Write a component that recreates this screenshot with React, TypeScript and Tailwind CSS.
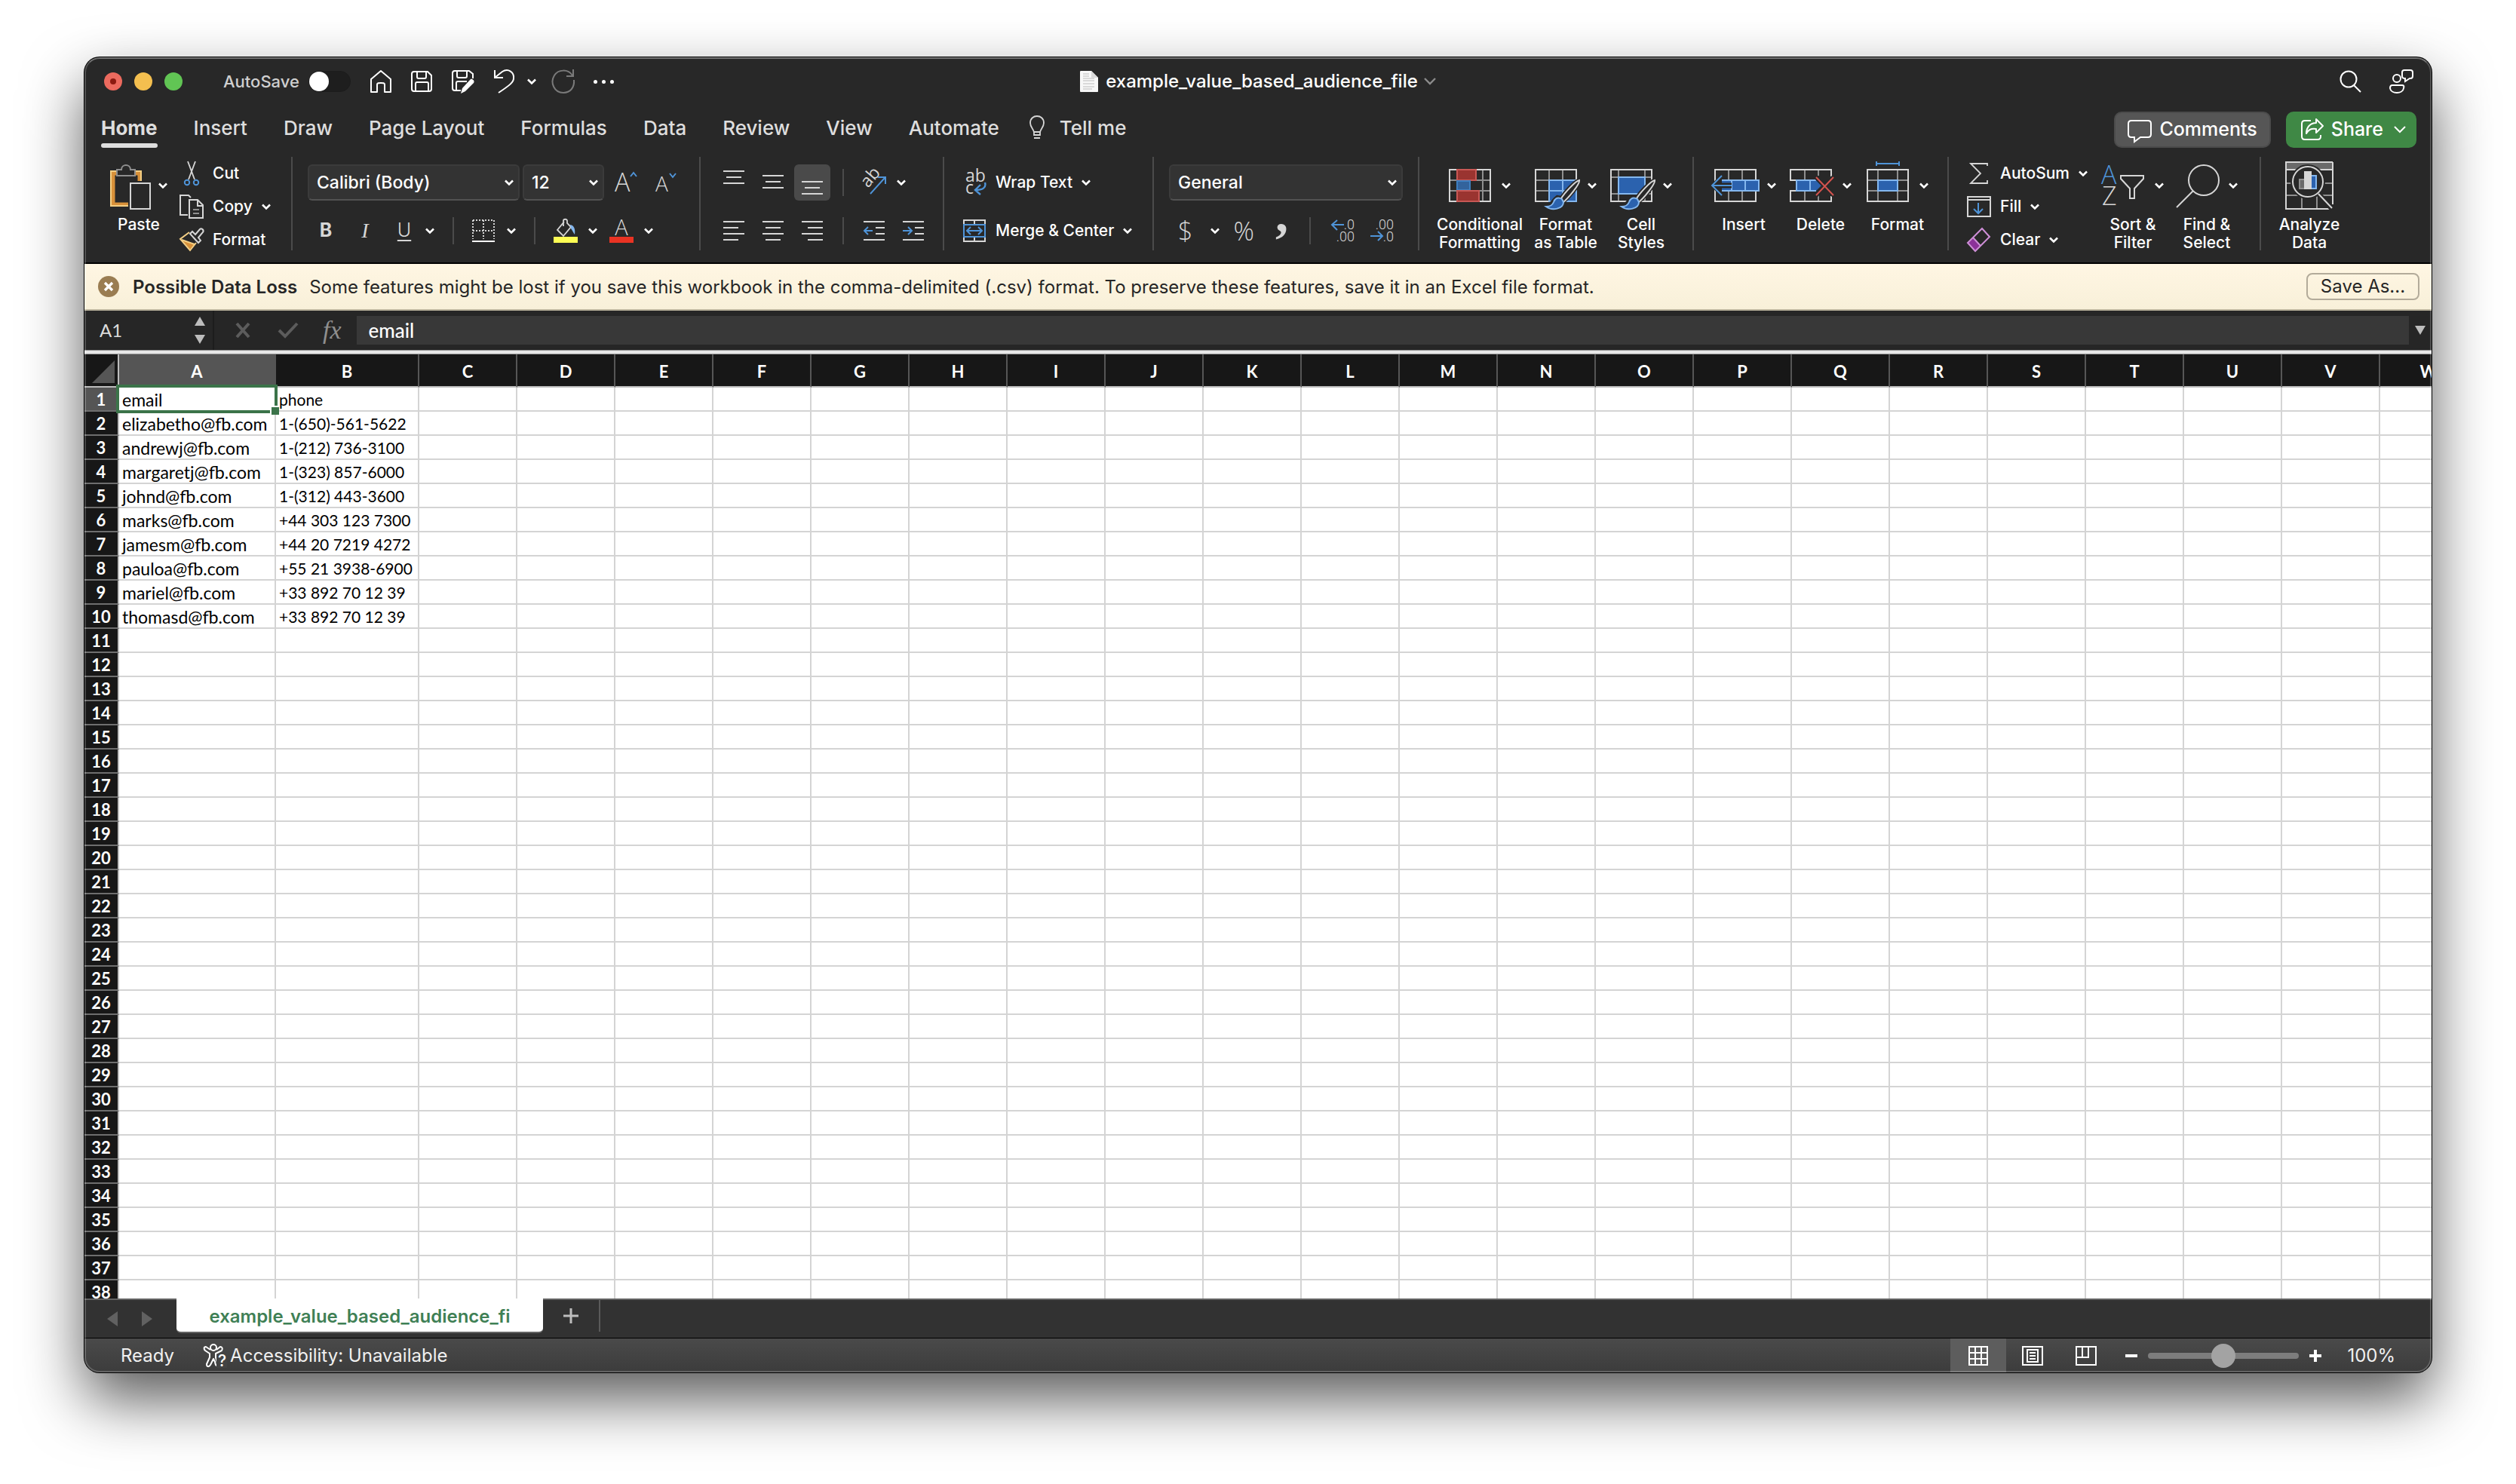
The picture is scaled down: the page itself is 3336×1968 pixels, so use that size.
import React from "react";

const COLUMNS = 'ABCDEFGHIJKLMNOPQRSTUVW'.split('')
const ROW_COUNT = 38

const CELLS: string[][] = [
  ['email', 'phone'],
  ['elizabetho@fb.com', '1-(650)-561-5622'],
  ['andrewj@fb.com', '1-(212) 736-3100'],
  ['margaretj@fb.com', '1-(323) 857-6000'],
  ['johnd@fb.com', '1-(312) 443-3600'],
  ['marks@fb.com', '+44 303 123 7300'],
  ['jamesm@fb.com', '+44 20 7219 4272'],
  ['pauloa@fb.com', '+55 21 3938-6900'],
  ['mariel@fb.com', '+33 892 70 12 39'],
  ['thomasd@fb.com', '+33 892 70 12 39'],
]

const TABS = ['Home', 'Insert', 'Draw', 'Page Layout', 'Formulas', 'Data', 'Review', 'View', 'Automate']

// icon colours
const GREY = '#d6d6d6'
const DIM = '#8f8f8f'
const BLUE = '#4f94d8'
const FILL = '#2b62ae'
const LIGHT = '#84b7ee'
const PAGE = '#282828'

// ---------------------------------------------------------------- basics

interface SvgProps {
  w: number
  h: number
  className?: string
  children: React.ReactNode
}

const Svg = ({ w, h, className = '', children }: SvgProps) => (
  <svg
    width={w}
    height={h}
    viewBox={`0 0 ${w} ${h}`}
    fill="none"
    stroke={GREY}
    strokeWidth={2}
    className={`shrink-0 overflow-visible ${className}`}
    aria-hidden="true"
  >
    {children}
  </svg>
)

const Chevron = ({ className = '' }: { className?: string }) => (
  <Svg w={12} h={8} className={className}>
    <path d="M1 1.5L6 6.5L11 1.5" stroke="#ffffff" strokeWidth={2.6} />
  </Svg>
)

const GroupDivider = () => <div className="h-[124px] w-0.5 shrink-0 bg-[#4b4b4b]" />
const SmallDivider = ({ className = '' }: { className?: string }) => (
  <div className={`h-9 w-0.5 shrink-0 bg-[#4b4b4b] ${className}`} />
)

interface BigButtonProps {
  icon: React.ReactNode
  label: string[]
  chevron?: boolean
  className?: string
}

/** Tall ribbon button, with its label below the icon. */
const BigButton = ({ icon, label, chevron = true, className = 'w-[84px]' }: BigButtonProps) => (
  <button className={`flex shrink-0 flex-col items-center gap-2 pt-1.5 ${className}`}>
    <span className="flex h-16 items-center gap-2.5">
      {icon}
      {chevron && <Chevron />}
    </span>
    <span className="text-[21px] leading-6 font-medium whitespace-nowrap">
      {label.map(line => <span key={line} className="block">{line}</span>)}
    </span>
  </button>
)

interface RowButtonProps {
  icon: React.ReactNode
  label: string
  chevron?: boolean
  className?: string
}

/** Flat ribbon button, with its label beside the icon. */
const RowButton = ({ icon, label, chevron = true, className = 'h-11' }: RowButtonProps) => (
  <button className={`flex items-center gap-3 text-[21px] font-medium whitespace-nowrap ${className}`}>
    <span className="flex w-8 justify-center">{icon}</span>
    {label}
    {chevron && <Chevron />}
  </button>
)

interface IconButtonProps {
  label: string
  active?: boolean
  children: React.ReactNode
}

const IconButton = ({ label, active = false, children }: IconButtonProps) => (
  <button
    aria-label={label}
    className={`flex size-12 shrink-0 items-center justify-center rounded-md ${active ? 'bg-[#4a4a4a]' : ''}`}
  >
    {children}
  </button>
)

interface PickerProps {
  label: string
  value: string
  className: string
}

const Picker = ({ label, value, className }: PickerProps) => (
  <div className={`relative h-12 shrink-0 ${className}`}>
    <select
      aria-label={label}
      className="size-full appearance-none rounded-md border-2 border-[#3b3b3b] border-b-[#525252] bg-[#333333] pl-2.5 text-[23px] font-medium text-white"
    >
      <option>{value}</option>
    </select>
    <Chevron className="pointer-events-none absolute top-5 right-2" />
  </div>
)

// ---------------------------------------------------------------- icons

const Lines = ({ rows }: { rows: [number, number, number][] }) => (
  <Svg w={28} h={34}>
    {rows.map(([x1, x2, y]) => <path key={y} d={`M${x1} ${y}H${x2}`} />)}
  </Svg>
)

const PasteIcon = () => (
  <Svg w={54} h={64}>
    <path d="M8 16H4V57H24M34 16H39V26" stroke="#d8913a" strokeWidth={5} />
    <path d="M8 13H1V59H24M34 13H41V26" stroke="#f4cf85" />
    <path d="M9 19V11H15C15 3 27 3 27 11H33V19Z" fill={PAGE} stroke={DIM} />
    <rect x="27" y="29" width="26" height="34" fill={PAGE} />
  </Svg>
)

const CutIcon = () => (
  <Svg w={24} h={32}>
    <path d="M7 0L16 24M17 0L8 24" strokeWidth={1.8} />
    <circle cx="6" cy="28" r="3.200" stroke={BLUE} />
    <circle cx="18" cy="28" r="3.200" stroke={BLUE} />
  </Svg>
)

const CopyIcon = () => (
  <Svg w={32} h={32}>
    <path d="M11 27H1V1H12L15 4" />
    <path d="M13 7H24L31 14V31H13ZM24 7V15H31" />
    <path d="M18 20H26M18 25H26" stroke={DIM} />
  </Svg>
)

const BrushIcon = () => (
  <Svg w={32} h={32}>
    <path d="M3 16L20 22L14 29Z" fill="#d8913a" stroke="none" />
    <path d="M13 6L1 15L14 30L22 20M3 16L20 22" stroke="#f4cf85" />
    <path d="M14 8L17 5L21 9L27 2C29 0 33 3 31 6L25 13L28 17L25 20Z" fill={PAGE} />
  </Svg>
)

const BorderIcon = () => (
  <Svg w={30} h={30}>
    <path d="M1 1H29M1 1V26M29 1V26M15 1V26M1 15H29" strokeDasharray="2 2" />
    <path d="M0 29H30" stroke="#ffffff" />
  </Svg>
)

const BucketIcon = () => (
  <Svg w={32} h={32}>
    <path d="M14 4L5 15L13 23L23 11L18 6V3C18 0 13 0 13 3V10" strokeWidth={1.8} />
    <path d="M22 8C27 9 29 13 28 21C26 18 25 16 23 13Z" fill={LIGHT} stroke="none" />
    <path d="M0 28H32" stroke="#fdfd54" strokeWidth={8} />
  </Svg>
)

const FontColourIcon = () => (
  <Svg w={32} h={32}>
    <text x="16" y="22" textAnchor="middle" fontSize="29" fontFamily="Open Sans" fontWeight="300" fill={GREY} stroke="none">A</text>
    <path d="M0 28H32" stroke="#e93323" strokeWidth={8} />
  </Svg>
)

const FontSizeIcon = ({ grow }: { grow: boolean }) => (
  <Svg w={30} h={34}>
    <text x="0" y="29" fontSize={grow ? 34 : 28} fontFamily="Open Sans" fontWeight="300" fill={GREY} stroke="none">A</text>
    <path d={grow ? 'M21 9L25 4L29 9' : 'M19 5L23 10L27 5'} stroke={BLUE} />
  </Svg>
)

const OrientationIcon = () => (
  <Svg w={32} h={32}>
    <text x="8" y="24" transform="rotate(-50 8 24)" fontSize="23" fontFamily="Open Sans" fill={GREY} stroke="none">ab</text>
    <path d="M11 31L30 10M21 9H31V18" stroke={BLUE} />
  </Svg>
)

const WrapIcon = () => (
  <Svg w={32} h={36}>
    <text x="4" y="17" fontSize="23" fontFamily="Open Sans" fill={GREY} stroke="none">ab</text>
    <text x="4" y="33" fontSize="23" fontFamily="Open Sans" fill={GREY} stroke="none">c</text>
    <path d="M30 18C32 25 27 28 17 28M24 21L17 28L24 34" stroke={BLUE} strokeWidth={2.4} />
  </Svg>
)

const MergeIcon = () => (
  <Svg w={30} h={30}>
    <path d="M1 1H29V29H1ZM15 1V7M15 23V29" />
    <rect x="1" y="7" width="28" height="16" fill={PAGE} stroke={BLUE} />
    <path d="M5 15H25M10 10L5 15L10 20M20 10L25 15L20 20" stroke={BLUE} />
  </Svg>
)

const IndentIcon = ({ increase }: { increase: boolean }) => (
  <Svg w={28} h={34}>
    <path d="M0 5H28M16 13H28M16 21H28M0 29H28" />
    <path d={increase ? 'M0 17H11M7 12L12 17L7 22' : 'M1 17H12M6 12L1 17L6 22'} stroke={BLUE} />
  </Svg>
)

const DecimalIcon = ({ increase }: { increase: boolean }) => (
  <Svg w={34} h={36}>
    <g fontSize="18" fontFamily="Roboto" fontWeight="300" fill={GREY} stroke="none" textAnchor="end">
      <text x="34" y="16">{increase ? '.0' : '.00'}</text>
      <text x="34" y="32">{increase ? '.00' : '.0'}</text>
    </g>
    <path d={increase ? 'M4 10H20M11 4L4 10L11 17' : 'M3 25H19M13 19L19 25L13 31'} stroke={BLUE} />
  </Svg>
)

const ConditionalIcon = () => (
  <Svg w={60} h={64}>
    <path d="M12 11V53M45 11V53M1 25H55M1 39H55" stroke={DIM} />
    <rect x="1" y="11" width="54" height="42" />
    <rect x="11" y="11" width="25" height="14" fill="#9a3430" stroke="#c85855" />
    <rect x="11" y="26" width="17" height="12" fill="#33639c" stroke="#3f7fc0" />
    <rect x="11" y="39" width="29" height="14" fill="#9a3430" stroke="#c85855" />
  </Svg>
)

const PaintBrush = () => (
  <g>
    <path d="M60 25C55 25 38 43 36 49L30 48C22 54 24 58 14 60C24 67 39 62 39 52C45 47 60 29 60 25Z" stroke={PAGE} strokeWidth={6} />
    <path d="M59 25C54 26 38 43 34 51L38 54C45 48 60 30 59 25Z" fill={PAGE} />
    <path d="M36 50C29 46 26 51 25 54C23 59 20 60 15 60C23 66 38 63 38 54Z" fill={FILL} stroke={LIGHT} />
  </g>
)

const FormatTableIcon = () => (
  <Svg w={60} h={64}>
    <path d="M19 11V53M37 11V53M1 25H55M1 39H55" stroke={DIM} />
    <rect x="1" y="11" width="54" height="42" />
    <rect x="19" y="25" width="36" height="28" fill={FILL} stroke={LIGHT} />
    <path d="M37 25V53M19 39H55" stroke={LIGHT} />
    <PaintBrush />
  </Svg>
)

const CellStylesIcon = () => (
  <Svg w={60} h={64}>
    <path d="M11 11V53M46 11V53M1 21H55M1 43H55" stroke={DIM} />
    <rect x="1" y="11" width="54" height="42" />
    <rect x="11" y="21" width="35" height="22" fill={FILL} stroke={LIGHT} />
    <PaintBrush />
  </Svg>
)

const InsertIcon = () => (
  <Svg w={64} h={64}>
    <path d="M23 11V53M41 11V53" stroke={DIM} />
    <rect x="5" y="11" width="54" height="42" />
    <path d="M3 32L12 22V42Z" stroke={PAGE} strokeWidth={6} fill={PAGE} />
    <rect x="12" y="25" width="51" height="14" fill={FILL} stroke={LIGHT} />
    <path d="M45 25V39M27 25V39" stroke={LIGHT} />
    <path d="M1 32H27" stroke={PAGE} strokeWidth={7} />
    <path d="M12 23V41" stroke={PAGE} strokeWidth={4} />
    <path d="M1 32H27M14 19L1 32L14 45" stroke={BLUE} />
  </Svg>
)

const DeleteIcon = () => (
  <Svg w={60} h={64}>
    <path d="M20 11V53M38 11V19M38 45V53" stroke={DIM} />
    <path d="M9 25H1V11H55V20M9 39H1V53H55V46" />
    <path d="M9 25H35L42 32L35 39H9Z" fill={FILL} stroke="none" />
    <path d="M35 25H9V39H35M27 25V39" stroke={LIGHT} />
    <path d="M35 21L58 45M58 21L35 45" stroke={PAGE} strokeWidth={6} />
    <path d="M35 21L58 45M58 21L35 45" stroke="#d5534e" />
  </Svg>
)

const FormatIcon = () => (
  <Svg w={60} h={64}>
    <path d="M15 11V53M41 11V53M1 25H55M1 39H55" stroke={DIM} />
    <rect x="1" y="11" width="54" height="42" />
    <rect x="15" y="25" width="26" height="14" fill={FILL} stroke={LIGHT} />
    <path d="M13 3H43M13 0V6M43 0V6" stroke={BLUE} />
  </Svg>
)

const SumIcon = () => (
  <Svg w={24} h={28}>
    <path d="M23 4V1H1L14 14L1 27H23V23" strokeWidth={1.8} />
  </Svg>
)

const FillIcon = () => (
  <Svg w={32} h={28}>
    <path d="M1 1H31V27H1ZM1 5H31" />
    <path d="M15 9V22M9 17L15 23L21 17" stroke={BLUE} />
  </Svg>
)

const EraserIcon = () => (
  <Svg w={32} h={32}>
    <path d="M8 14L17 24L11 30L2 20Z" fill="#8b3199" stroke="none" />
    <path d="M20 1L30 12L11 31L1 20ZM8 13L18 24" stroke="#cf8fd8" />
  </Svg>
)

const SortIcon = () => (
  <Svg w={60} h={64}>
    <text x="-1" y="30" fontSize="34" fontFamily="Open Sans" fontWeight="300" fill={BLUE} stroke="none">A</text>
    <text x="0" y="58" fontSize="34" fontFamily="Open Sans" fontWeight="300" fill={GREY} stroke="none">Z</text>
    <path d="M25 19H55V23L43 36V49H37V36L25 23Z" />
  </Svg>
)

const FindIcon = () => (
  <Svg w={60} h={64}>
    <circle cx="37" cy="25" r="20" />
    <path d="M23 39L1 61" />
  </Svg>
)

const AnalyzeIcon = () => (
  <Svg w={64} h={64}>
    <path d="M2 2H62V11H2Z" fill="#6a6a6a" stroke="none" />
    <path d="M2 29H62M2 45H62M22 48V63M42 45V63" stroke={DIM} />
    <path d="M1 11H63" />
    <path d="M63 1H1V63H60M63 1V57" />
    <circle cx="30" cy="27" r="22" fill={PAGE} stroke={PAGE} />
    <path d="M44 43L63 64" stroke={PAGE} strokeWidth={7} />
    <circle cx="30" cy="27" r="20" fill={PAGE} />
    <path d="M44 43L62 62" />
    <rect x="19" y="24" width="7" height="12" fill="#6a6a6a" stroke={DIM} />
    <rect x="33" y="19" width="8" height="17" fill={FILL} stroke={LIGHT} />
    <rect x="26" y="14" width="8" height="22" fill={GREY} />
  </Svg>
)

const HomeIcon = () => (
  <Svg w={28} h={32}>
    <path d="M1 13L14 2L27 13V30H19V20C19 18 17 18 14 18C11 18 9 18 9 20V30H1Z" stroke="#ffffff" strokeLinejoin="round" />
  </Svg>
)

const SaveIcon = () => (
  <Svg w={28} h={28}>
    <path d="M1 4C1 2 2 1 4 1H22L27 6V24C27 26 26 27 24 27H4C2 27 1 26 1 24ZM8 1V8C8 10 9 10 10 10H18C20 10 20 9 20 8V1M6 27V17C6 15 7 15 8 15H21C22 15 23 15 23 17V27" stroke="#ffffff" />
  </Svg>
)

const SavePenIcon = () => (
  <Svg w={30} h={32}>
    <path d="M28 12V6L23 2H4C2 2 1 3 1 5V25C1 27 2 28 4 28H12M7 2V9C7 10 8 11 9 11H18C19 11 20 10 20 9V2M6 28V18C6 16 7 16 8 16H20" stroke="#ffffff" />
    <path d="M12 32L14 25L25 13C27 12 31 15 29 18L18 29Z" fill="#ffffff" stroke="none" />
  </Svg>
)

const UndoIcon = () => (
  <Svg w={28} h={32}>
    <path d="M1 1V11H12M1 11L11 3C19 -2 27 4 26 12C26 17 21 21 6 31" stroke="#ffffff" />
  </Svg>
)

const RedoIcon = () => (
  <Svg w={32} h={32}>
    <path d="M29 0V9H20M28 8C22 -1 9 0 4 8C-2 18 4 31 16 31C25 31 31 24 30 14" stroke="#7a7a7a" />
  </Svg>
)

const DocIcon = () => (
  <Svg w={24} h={28}>
    <path d="M0 1C0 0 1 0 1 0H15L24 9V27C24 28 23 28 23 28H1C0 28 0 27 0 27Z" fill="#f7f7f7" stroke="none" />
    <path d="M15 0V9H24Z" fill="#dadada" stroke="none" />
    <path d="M4 4H12M4 7H12M4 10H19M4 13H19M4 17H19M4 21H19M4 24H16" stroke="#cfcfcf" strokeWidth={1.4} />
  </Svg>
)

const AccessibilityIcon = () => (
  <Svg w={32} h={32}>
    <circle cx="14" cy="5" r="4" stroke="#ffffff" />
    <path d="M10 8L4 4C1 4 1 7 3 9L9 13V18L5 27C5 31 8 31 10 28L14 20L16 24C17 31 21 30 19 25L17 18V13L25 9C27 6 25 4 23 4L18 8" stroke="#ffffff" strokeLinejoin="round" />
    <path d="M18 32V15H32V32Z" fill="#434343" stroke="none" />
    <text x="20" y="30" fontSize="21" fontFamily="Inter" fontWeight="500" fill="#ffffff" stroke="none">?</text>
  </Svg>
)

// ---------------------------------------------------------------- sections

const TitleBar = () => (
  <div className="grid h-16 grid-cols-[1fr_auto_1fr] items-center">
    <div className="flex items-center pl-[26px]">
      <div className="flex gap-4">
        <button aria-label="Close" className="flex size-6 items-center justify-center rounded-full bg-[#ec6a5e]">
          <span className="size-2 rounded-full bg-[#8c1a10]" />
        </button>
        <button aria-label="Minimize" className="size-6 rounded-full bg-[#f4bf4f]" />
        <button aria-label="Zoom" className="size-6 rounded-full bg-[#61c554]" />
      </div>
      <label className="ml-[54px] flex items-center gap-3 text-[22px] font-medium text-[#cfcfcf]">
        AutoSave
        <input
          type="checkbox"
          role="switch"
          className="h-7 w-14 appearance-none rounded-full border border-[#1c1c1c] bg-[#1e1e1e] before:block before:size-[26px] before:rounded-full before:bg-white"
        />
      </label>
      <div className="ml-[26px] flex items-center gap-[26px]">
        <button aria-label="Home"><HomeIcon /></button>
        <button aria-label="Save"><SaveIcon /></button>
        <button aria-label="Save As"><SavePenIcon /></button>
        <button aria-label="Undo" className="flex items-center gap-4"><UndoIcon /><Chevron /></button>
      </div>
      <button aria-label="Redo" className="ml-5"><RedoIcon /></button>
      <button aria-label="More" className="ml-6 flex gap-1.5">
        <span className="size-[5px] rounded-full bg-white" />
        <span className="size-[5px] rounded-full bg-white" />
        <span className="size-[5px] rounded-full bg-white" />
      </button>
    </div>
    <h1 className="flex items-center text-2xl font-medium text-white">
      <DocIcon />
      <span className="ml-2.5">example_value_based_audience_file</span>
      <Svg w={16} h={10} className="ml-2">
        <path d="M1 1L8 8L15 1" stroke="#8c8c8c" strokeWidth={2.4} />
      </Svg>
    </h1>
    <div className="flex items-center justify-end gap-9 pr-6">
      <button aria-label="Search">
        <Svg w={30} h={30}>
          <circle cx="12" cy="12" r="10.500" stroke="#ffffff" />
          <path d="M19 20L28 29" stroke="#ffffff" />
        </Svg>
      </button>
      <button aria-label="Presence">
        <Svg w={32} h={32}>
          <circle cx="10" cy="12" r="5" stroke="#ffffff" />
          <path d="M4 21H17C19 21 20 22 19 25C18 33 2 33 1 25C1 22 2 21 4 21ZM20 1H28C30 1 31 2 31 4V9C31 11 30 12 28 12H27L21 16V12C18 12 17 11 17 9V4C17 2 18 1 20 1Z" stroke="#ffffff" />
        </Svg>
      </button>
    </div>
  </div>
)

const TabRow = () => {
  const [current, setCurrent] = React.useState('Home')
  return (
    <div className="flex h-16 items-start pr-5 pl-[22px] text-[26px] text-[#dedede]">
      <nav className="flex gap-12">
        {TABS.map(tab => (
          <button
            key={tab}
            className={`relative h-14 pt-0.5 whitespace-nowrap ${tab === current ? 'font-bold' : 'font-medium'}`}
            onClick={() => setCurrent(tab)}
          >
            {tab}
            {tab === current && <span className="absolute inset-x-0 bottom-0 h-1.5 rounded-full bg-[#dedede]" />}
          </button>
        ))}
      </nav>
      <button className="ml-10 flex h-14 items-center gap-5 pt-0.5 font-medium">
        <Svg w={20} h={32}>
          <path d="M6 23C6 18 1 16 1 10C1 -2 19 -2 19 10C19 16 14 18 14 23V26H6V22H14M6 30H14" strokeWidth={1.8} />
        </Svg>
        Tell me
      </button>
      <div className="mt-2 ml-auto flex gap-5 text-[25px] text-white">
        <button className="flex h-12 items-center gap-2.5 rounded-[10px] border-2 border-[#4b4b4b] bg-[#565656] px-4 font-medium">
          <Svg w={32} h={32} className="mt-1">
            <path d="M5 2H27C30 2 31 3 31 6V20C31 23 30 24 27 24H17L9 30V24H5C2 24 1 23 1 20V6C1 3 2 2 5 2Z" stroke="#ffffff" />
          </Svg>
          Comments
        </button>
        <button className="flex h-12 items-center rounded-[10px] bg-[#3f8845] px-3.5 pl-5 font-medium">
          <Svg w={30} h={30}>
            <path d="M13 3H5C2 3 1 4 1 7V24C1 27 2 28 5 28H22C25 28 26 27 26 24V22M20 1L29 10L20 19V14C13 13 10 15 7 20C7 12 12 6 20 6Z" stroke="#ffffff" strokeLinejoin="round" />
          </Svg>
          <span className="ml-2.5">Share</span>
          <Svg w={16} h={12} className="ml-3.5">
            <path d="M1 2L8 9L15 2" stroke="#ffffff" />
          </Svg>
        </button>
      </div>
    </div>
  )
}

const Ribbon = () => (
  <div className="flex h-36 items-start overflow-hidden pt-1 text-white">

    {/* Clipboard */}
    <section className="flex w-[274px] shrink-0 items-start gap-4 pl-[34px]">
      <BigButton icon={<PasteIcon />} label={['Paste']} className="w-[76px]" />
      <div className="flex flex-col">
        <RowButton icon={<CutIcon />} label="Cut" chevron={false} />
        <RowButton icon={<CopyIcon />} label="Copy" />
        <RowButton icon={<BrushIcon />} label="Format" chevron={false} />
      </div>
    </section>
    <GroupDivider />

    {/* Font */}
    <section className="flex w-[539px] shrink-0 flex-col gap-4 pt-2.5 pl-5">
      <div className="flex items-center">
        <Picker label="Font" value="Calibri (Body)" className="w-[281px]" />
        <Picker label="Font size" value="12" className="ml-1 w-[108px]" />
        <button aria-label="Increase font size" className="ml-3.5"><FontSizeIcon grow={true} /></button>
        <button aria-label="Decrease font size" className="ml-6"><FontSizeIcon grow={false} /></button>
      </div>
      <div className="flex h-12 items-center">
        <div className="flex gap-1 text-[25px] text-[#d6d6d6]">
          <button aria-label="Bold" className="size-12 font-bold">B</button>
          <button aria-label="Italic" className="size-12 font-[Liberation_Serif,serif] text-[28px] italic">I</button>
          <button aria-label="Underline" className="size-12 font-light underline underline-offset-4">U</button>
        </div>
        <Chevron className="ml-1" />
        <SmallDivider className="ml-6" />
        <button aria-label="Borders" className="ml-6 flex items-center gap-4"><BorderIcon /><Chevron /></button>
        <SmallDivider className="ml-6" />
        <button aria-label="Fill colour" className="ml-6 flex items-center gap-3.5"><BucketIcon /><Chevron /></button>
        <button aria-label="Font colour" className="ml-4 flex items-center gap-3.5"><FontColourIcon /><Chevron /></button>
      </div>
    </section>
    <GroupDivider />

    {/* Alignment */}
    <section className="flex w-[321px] shrink-0 flex-col gap-4 pt-2.5 pl-5">
      <div className="flex items-center">
        <div className="flex gap-1">
          <IconButton label="Top align"><Lines rows={[[0, 28, 2], [4, 24, 10], [0, 28, 18]]} /></IconButton>
          <IconButton label="Middle align"><Lines rows={[[0, 28, 8], [4, 24, 16], [0, 28, 24]]} /></IconButton>
          <IconButton label="Bottom align" active={true}><Lines rows={[[0, 28, 16], [4, 24, 24], [0, 28, 32]]} /></IconButton>
        </div>
        <SmallDivider className="mx-4" />
        <IconButton label="Orientation"><OrientationIcon /></IconButton>
        <Chevron className="ml-1.5" />
      </div>
      <div className="flex items-center">
        <div className="flex gap-1">
          <IconButton label="Align left"><Lines rows={[[0, 28, 5], [0, 20, 13], [0, 28, 21], [0, 20, 29]]} /></IconButton>
          <IconButton label="Center"><Lines rows={[[0, 28, 5], [4, 24, 13], [0, 28, 21], [4, 24, 29]]} /></IconButton>
          <IconButton label="Align right"><Lines rows={[[0, 28, 5], [8, 28, 13], [0, 28, 21], [8, 28, 29]]} /></IconButton>
        </div>
        <SmallDivider className="mx-4" />
        <div className="flex gap-1">
          <IconButton label="Decrease indent"><IndentIcon increase={false} /></IconButton>
          <IconButton label="Increase indent"><IndentIcon increase={true} /></IconButton>
        </div>
      </div>
    </section>
    <GroupDivider />

    <section className="flex w-[276px] shrink-0 flex-col gap-4 pt-2.5 pl-6">
      <RowButton icon={<WrapIcon />} label="Wrap Text" className="h-12" />
      <RowButton icon={<MergeIcon />} label="Merge &amp; Center" className="h-12" />
    </section>
    <GroupDivider />

    {/* Number */}
    <section className="flex w-[350px] shrink-0 flex-col gap-4 pt-2.5 pl-5">
      <Picker label="Number format" value="General" className="w-[310px]" />
      <div className="flex h-12 items-center font-[Open_Sans,sans-serif] text-[34px] font-light text-[#d6d6d6]">
        <button aria-label="Currency" className="ml-3 flex items-center gap-6">$<Chevron /></button>
        <button aria-label="Percent" className="ml-[18px]">%</button>
        <button aria-label="Comma style" className="ml-7 flex h-12 items-start font-[Liberation_Serif,serif] text-[68px] leading-1 font-bold">,</button>
        <SmallDivider className="mr-6 ml-7" />
        <div className="flex gap-[18px]">
          <button aria-label="Increase decimal"><DecimalIcon increase={true} /></button>
          <button aria-label="Decrease decimal"><DecimalIcon increase={false} /></button>
        </div>
      </div>
    </section>
    <GroupDivider />

    {/* Styles */}
    <section className="flex w-[362px] shrink-0 items-start gap-4 pl-6">
      <BigButton icon={<ConditionalIcon />} label={['Conditional', 'Formatting']} className="w-28" />
      <BigButton icon={<FormatTableIcon />} label={['Format', 'as Table']} />
      <BigButton icon={<CellStylesIcon />} label={['Cell', 'Styles']} />
    </section>
    <GroupDivider />

    {/* Cells */}
    <section className="flex w-[336px] shrink-0 items-start gap-[18px] pl-6">
      <BigButton icon={<InsertIcon />} label={['Insert']} />
      <BigButton icon={<DeleteIcon />} label={['Delete']} />
      <BigButton icon={<FormatIcon />} label={['Format']} />
    </section>
    <GroupDivider />

    {/* Editing */}
    <section className="flex w-[412px] shrink-0 items-start pl-6">
      <div className="flex w-[178px] flex-col">
        <RowButton icon={<SumIcon />} label="AutoSum" />
        <RowButton icon={<FillIcon />} label="Fill" />
        <RowButton icon={<EraserIcon />} label="Clear" />
      </div>
      <div className="flex gap-3.5">
        <BigButton icon={<SortIcon />} label={['Sort &', 'Filter']} />
        <BigButton icon={<FindIcon />} label={['Find &', 'Select']} />
      </div>
    </section>
    <GroupDivider />

    <section className="pl-6">
      <BigButton icon={<AnalyzeIcon />} label={['Analyze', 'Data']} chevron={false} className="w-20" />
    </section>
  </div>
)

const WarningBanner = () => (
  <div className="flex h-[62px] shrink-0 items-center border-b-2 border-[#bdb69f] bg-linear-to-b from-[#fff6e3] to-[#f8f0d9] pr-4 pl-[18px] text-2xl text-[#262626]">
    <button aria-label="Dismiss" className="flex size-7 items-center justify-center rounded-full bg-[#9a7d52]">
      <Svg w={14} h={14}>
        <path d="M2 2L12 12M12 2L2 12" stroke="#ffffff" strokeWidth={3.4} />
      </Svg>
    </button>
    <strong className="ml-[18px] pt-0.5 font-semibold">Possible Data Loss</strong>
    <p className="ml-4 pt-0.5">
      Some features might be lost if you save this workbook in the comma-delimited (.csv) format. To preserve these features, save it in an Excel file format.
    </p>
    <button className="ml-auto h-9 w-[150px] rounded-lg border-2 border-[#b3ab9a] leading-none">Save As...</button>
  </div>
)

const FormulaBar = () => (
  <div className="flex h-[52px] shrink-0 items-center bg-[#262626] font-[Lato,sans-serif]">
    <div className="flex h-full w-[172px] items-center justify-between border-r-2 border-[#1d1d1d] pr-2.5 pl-5">
      <input aria-label="Name box" defaultValue="A1" className="w-24 text-2xl text-[#dcdcdc]" />
      <Svg w={14} h={36}>
        <path d="M7 0L14 12H0ZM7 36L14 24H0Z" fill="#bdbdbd" stroke="none" />
      </Svg>
    </div>
    <button aria-label="Cancel" className="ml-7">
      <Svg w={20} h={20}><path d="M2 1L18 19M18 1L2 19" stroke="#5c5c5c" strokeWidth={4} /></Svg>
    </button>
    <button aria-label="Enter" className="ml-9">
      <Svg w={28} h={20}><path d="M2 10L10 18L26 1" stroke="#5c5c5c" strokeWidth={4} /></Svg>
    </button>
    <button aria-label="Insert function" className="ml-8 font-[Liberation_Serif,serif] text-[34px] leading-none text-[#8f8f8f] italic">fx</button>
    <input
      aria-label="Formula"
      defaultValue="email"
      className="ml-5 h-[38px] flex-1 bg-[#383838] px-4 text-[26px] font-medium text-white"
    />
    <button aria-label="Expand formula bar" className="px-2">
      <Svg w={14} h={12}><path d="M0 0H14L7 12Z" fill="#bdbdbd" stroke="none" /></Svg>
    </button>
  </div>
)

const SheetGrid = () => (
  <div className="min-h-0 flex-1 overflow-hidden bg-white">
    <table className="w-[3174px] table-fixed border-separate border-spacing-0 font-[Lato,sans-serif] text-[22px] text-black">
      <colgroup>
        <col className="w-[46px]" />
        {COLUMNS.map(col => (
          <col key={col} className={col === 'A' ? 'w-[208px]' : col === 'B' ? 'w-[190px]' : 'w-[130px]'} />
        ))}
      </colgroup>
      <thead>
        <tr className="h-11 text-white">
          <th className="border-r-2 border-b-2 border-[#bdbdbd] bg-[#171717] p-0">
            <Svg w={30} h={30} className="mt-1 ml-2.5">
              <path d="M30 0V30H0Z" fill="#565656" stroke="none" />
            </Svg>
          </th>
          {COLUMNS.map(col => (
            <th
              key={col}
              className={`border-r-2 border-b-2 border-b-[#bdbdbd] p-0 pt-0.5 font-bold ${col === 'A' ? 'border-r-[#555555] bg-[#555555]' : 'border-r-[#565656] bg-[#171717]'}`}
            >
              {col}
            </th>
          ))}
        </tr>
      </thead>
      <tbody>
        {Array.from({ length: ROW_COUNT }, (_, r) => (
          <tr key={r} className="h-8">
            <th
              className={`border-r-2 border-b-2 border-r-[#bdbdbd] border-b-[#6e6e6e] p-0 pt-0.5 leading-7 font-bold text-white ${r === 0 ? 'bg-[#555555]' : 'bg-[#171717]'}`}
            >
              {r + 1}
            </th>
            {COLUMNS.map((col, c) => (
              <td
                key={col}
                className={`relative border-r-2 border-b-2 border-[#d4d4d4] p-0 pt-0.5 pl-1 leading-7 whitespace-nowrap ${c === 0 ? 'text-[23px]' : 'text-[21px]'}`}
              >
                {CELLS[r]?.[c]}
                {r === 0 && c === 0 && (
                  <span className="absolute -inset-x-1 -inset-y-1 z-10 border-4 border-[#3b7349]">
                    <span className="absolute -right-1.5 -bottom-1.5 size-3 border-t-2 border-l-2 border-white bg-[#3b7349]" />
                  </span>
                )}
              </td>
            ))}
          </tr>
        ))}
      </tbody>
    </table>
  </div>
)

const SheetTabs = () => (
  <div className="flex h-[52px] shrink-0 items-start bg-[#323232]">
    <div className="flex h-[52px] w-[122px] items-center gap-8 border-t-2 border-[#636363] pl-[30px]">
      <button aria-label="Previous sheet">
        <Svg w={14} h={20}><path d="M14 0V20L0 10Z" fill="#616161" stroke="none" /></Svg>
      </button>
      <button aria-label="Next sheet">
        <Svg w={14} h={20}><path d="M0 0V20L14 10Z" fill="#616161" stroke="none" /></Svg>
      </button>
    </div>
    <button className="h-[46px] w-[486px] rounded-b-md border-b-2 border-[#636363] bg-white pt-1 text-2xl font-semibold text-[#3f8055]">
      example_value_based_audience_fi
    </button>
    <div className="flex h-11 flex-1 border-t-2 border-[#636363]">
      <button aria-label="Add sheet" className="flex w-[76px] items-center justify-center border-r-2 border-[#5a5a5a]">
        <Svg w={20} h={20}><path d="M10 0V20M0 10H20" stroke="#bdbdbd" strokeWidth={3} /></Svg>
      </button>
    </div>
  </div>
)

const StatusBar = () => (
  <div className="flex h-[46px] shrink-0 items-center border-t border-black bg-linear-to-b from-[#4a4a4a] to-[#3c3c3c] px-12 text-2xl text-[#f0f0f0]">
    <span>Ready</span>
    <button className="ml-[38px] flex items-center gap-1"><AccessibilityIcon />Accessibility: Unavailable</button>
    <div className="ml-auto flex h-full items-center">
      <button aria-label="Normal view" className="flex h-full w-[74px] items-center justify-center bg-[#5d5d5d]">
        <Svg w={26} h={26}><path d="M1 1H25V25H1ZM9 1V25M17 1V25M1 9H25M1 17H25" stroke="#ffffff" /></Svg>
      </button>
      <button aria-label="Page layout view" className="flex h-full w-[70px] items-center justify-center">
        <Svg w={28} h={26}><path d="M1 1H27V25H1ZM7 5H21V21H7ZM10 9H18M10 13H18M10 17H18" stroke="#ffffff" /></Svg>
      </button>
      <button aria-label="Page break view" className="flex h-full w-[72px] items-center justify-center">
        <Svg w={28} h={26}><path d="M1 1H27V25H1ZM1 15H17V1M9 1V15" stroke="#ffffff" /></Svg>
      </button>
      <button aria-label="Zoom out" className="ml-4">
        <Svg w={16} h={16}><path d="M0 8H16" stroke="#ffffff" strokeWidth={4} /></Svg>
      </button>
      <input
        type="range"
        aria-label="Zoom"
        min={0}
        max={100}
        defaultValue={50}
        className="mx-3.5 h-8 w-[200px] appearance-none bg-transparent [&::-webkit-slider-runnable-track]:h-2 [&::-webkit-slider-runnable-track]:rounded-full [&::-webkit-slider-runnable-track]:bg-[#7d7d7d] [&::-webkit-slider-thumb]:-mt-3 [&::-webkit-slider-thumb]:size-8 [&::-webkit-slider-thumb]:appearance-none [&::-webkit-slider-thumb]:rounded-full [&::-webkit-slider-thumb]:bg-[#a3a3a3]"
      />
      <button aria-label="Zoom in">
        <Svg w={16} h={16}><path d="M0 8H16M8 0V16" stroke="#ffffff" strokeWidth={4} /></Svg>
      </button>
      <span className="ml-[34px]">100%</span>
    </div>
  </div>
)

export default function App() {
  return (
    <main className="flex h-screen flex-col bg-white px-28 pt-[76px] pb-[148px] font-[Inter,sans-serif]">
      <div className="relative flex min-h-0 flex-1 flex-col overflow-hidden rounded-[20px] bg-[#282828] shadow-[0_0_0_1px_#000000,0_36px_80px_rgba(0,0,0,0.65)]">
        <header className="shrink-0 border-b-2 border-black">
          <TitleBar />
          <TabRow />
          <Ribbon />
        </header>
        <WarningBanner />
        <FormulaBar />
        <div className="h-1.5 shrink-0 border-y border-[#8f8f8f] bg-[#e8e8e8]" />
        <SheetGrid />
        <SheetTabs />
        <StatusBar />
        {/* light rim of the window */}
        <div className="pointer-events-none absolute inset-0 rounded-[20px] border-2 border-white/20 border-t-white/35" />
      </div>
    </main>
  );
}
